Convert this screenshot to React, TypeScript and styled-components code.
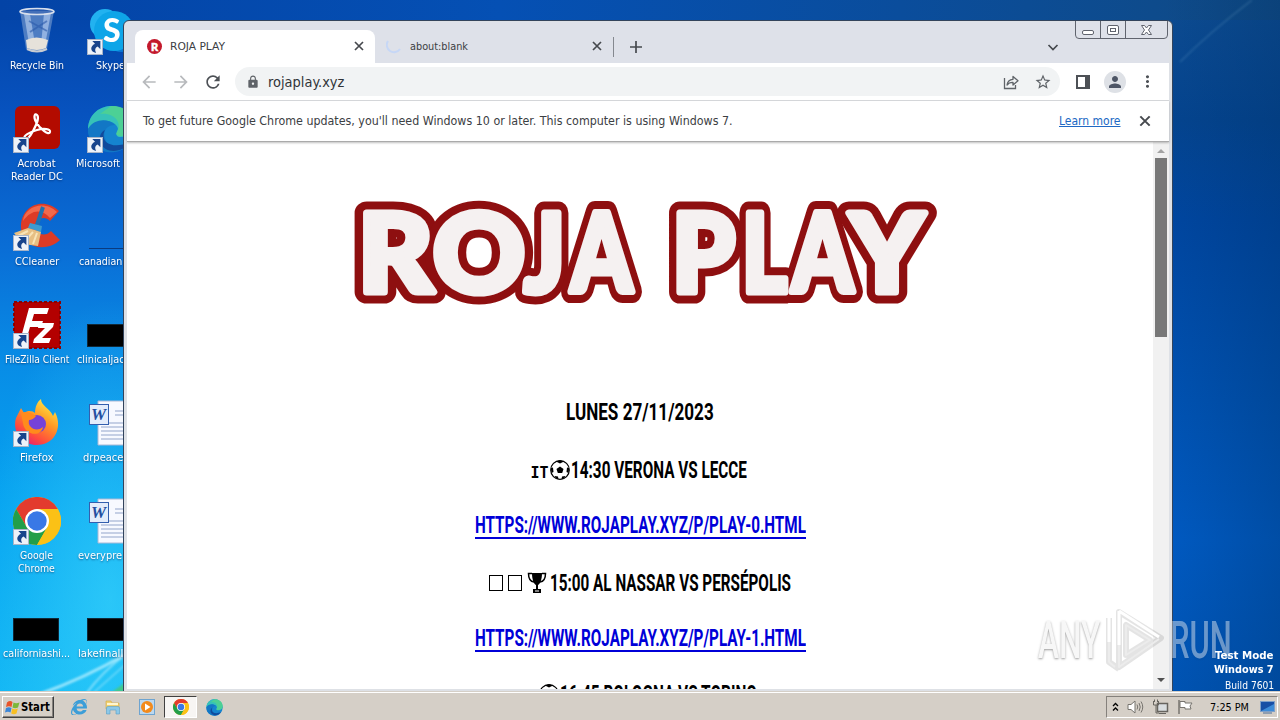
import { useLayoutEffect, useRef, useState, type ReactNode } from 'react';
import { createGlobalStyle, styled } from 'styled-components';
import {
  MdArrowBack,
  MdArrowForward,
  MdLock,
  MdMoreVert,
  MdPerson,
  MdRefresh,
  MdStarBorder,
} from 'react-icons/md';
import { FaInternetExplorer } from 'react-icons/fa';

const UI_FONT = "'DejaVu Sans Condensed', 'DejaVu Sans', sans-serif";

// Squeezes or stretches one line of text to a fixed width
function Fit({ width, children }: { width: number; children: ReactNode }) {
  const ref = useRef<HTMLSpanElement>(null);
  const [scale, setScale] = useState(1);

  useLayoutEffect(() => {
    if (ref.current) setScale(width / ref.current.offsetWidth);
  }, [width]);

  return (
    <Styled.Fit $width={width}>
      <span ref={ref} style={{ transform: `scaleX(${scale})` }}>
        {children}
      </span>
    </Styled.Fit>
  );
}

// Small stroked glyphs of the browser's chrome, on a 12px grid
function Glyph({ d, size = 12 }: { d: string; size?: number }) {
  return (
    <svg width={size} height={size} viewBox="0 0 12 12" fill="none" stroke="#46494e" strokeWidth="1.7">
      <path d={d} />
    </svg>
  );
}

const CROSS = 'M2 2 L10 10 M10 2 L2 10';
const PLUS = 'M6 0 V12 M0 6 H12';
const CHEVRON = 'M1.5 4 L6 8.5 L10.5 4';

function RecycleBin() {
  return (
    <svg width="48" height="48" viewBox="0 0 48 48">
      <path d="M7 4 L13 42 Q24 47 34 42 L41 4Z" fill="#8aa9d6" fillOpacity=".55" />
      <path d="M11 7 L16 37 L22 37 L17 7Z" fill="#e4efff" fillOpacity=".45" />
      <path d="M31 6 L38 6 L32 38 L28 38Z" fill="#d4e5ff" fillOpacity=".5" />
      <path d="M16 14 L34 24 M34 14 L17 25" stroke="#2c5bab" strokeWidth="2" opacity=".6" />
      <path d="M13 33 Q23 28 35 33 L33 41 Q24 45 14 41Z" fill="#e6e2da" />
      <path d="M14 42 Q24 47 34 42" fill="none" stroke="#c8ccd2" strokeWidth="2" />
      <ellipse cx="24" cy="4.5" rx="17" ry="3" fill="#3e67b2" fillOpacity=".6" stroke="#d7dfec" strokeWidth="1.6" />
    </svg>
  );
}

function Skype() {
  return (
    <svg width="48" height="48" viewBox="0 0 48 48">
      <circle cx="18" cy="17" r="15" fill="#22b2f0" />
      <circle cx="34" cy="31" r="14" fill="#0a78d4" />
      <circle cx="27" cy="24" r="20" fill="#0ea5e8" />
      <text x="16" y="35" fontSize="32" fontWeight="900" fontFamily="Lato" fill="#fff">S</text>
    </svg>
  );
}

function Acrobat() {
  return (
    <svg width="48" height="48" viewBox="0 0 48 48">
      <rect x="2" y="1" width="45" height="43" rx="6" fill="#b30b00" />
      <path
        d="M12 34 C9 31 17 27 24 25 C31 23 38 24 37 27 C36 31 27 24 23 17 C20 11 22 8 24 10 C26 12 24 19 20 26 C17 32 13 36 12 34Z"
        fill="none"
        stroke="#fff"
        strokeWidth="2.2"
      />
    </svg>
  );
}

function Edge({ size = 48 }: { size?: number }) {
  return (
    <svg width={size} height={size} viewBox="0 0 48 48">
      <circle cx="24" cy="24" r="23" fill="#1584cf" />
      <path d="M1 24 C2 -6 45 -6 47 20 C47 29 42 32 34 32 C28 32 29 28 31 24 C30 15 10 11 1 24Z" fill="#36c2b8" />
      <path d="M24 1 C39 0 48 11 47 22 C46 31 31 33 29 29 C37 18 27 7 13 9Z" fill="#54d48a" fillOpacity=".75" />
      <path d="M1 24 C7 13 22 13 28 20 C19 20 16 27 18 33 C20 42 31 46 40 41 C29 53 1 48 1 24Z" fill="#1277c5" />
      <path d="M18 25 C12 37 25 45 43 37 C36 48 19 49 14 39 C11 32 14 27 18 25Z" fill="#114a9c" />
    </svg>
  );
}

function CCleaner() {
  return (
    <svg width="48" height="48" viewBox="0 0 48 48">
      <path d="M46 8 C30 -7 7 3 8 25 C9 45 33 50 47 37 L38 28 C33 34 23 32 22 24 C22 15 32 12 37 18Z" fill="#dc3b26" />
      <path d="M44 9 C31 -4 11 4 10 18 C18 7 28 5 37 15Z" fill="#f2694b" />
      <path d="M30 4 L24 22" stroke="#1f72b0" strokeWidth="4" />
      <path d="M17 20 L29 23 L28 29 L15 25Z" fill="#3d9bd0" />
      <path d="M15 25 L28 29 L25 43 L10 41 L1 30Z" fill="#e7bf83" />
      <path d="M15 28 L5 33 M20 29 L11 39 M24 30 L20 41" stroke="#f9e4b7" strokeWidth="2" />
    </svg>
  );
}

function FileZilla() {
  return (
    <svg width="48" height="48" viewBox="0 0 48 48">
      <rect x="1" y="1" width="46" height="46" fill="#b30000" stroke="#8b0000" strokeWidth="2" strokeDasharray="3 2" />
      <path d="M16 7 H36 L34 13 H21 L19 20 H30 L28 26 H17 L13 40 H7Z" fill="#fff" />
      <path d="M26 22 H41 L40 26 L29 37 H38 L36 42 H20 L21 38 L32 27 H25Z" fill="#fff" />
    </svg>
  );
}

function Firefox() {
  return (
    <svg width="48" height="48" viewBox="0 0 48 48">
      <defs>
        <linearGradient id="fox" x1=".8" y1="0" x2=".2" y2="1">
          <stop offset="0" stopColor="#fff04a" />
          <stop offset=".4" stopColor="#ff9a24" />
          <stop offset=".75" stopColor="#ff4b3e" />
          <stop offset="1" stopColor="#e3177e" />
        </linearGradient>
      </defs>
      <path
        d="M28 0 C28 7 37 9 40 17 L42 13 C50 28 42 46 24 46 C8 46 -1 32 3 19 L8 9 L11 14 C15 11 20 12 22 14 C22 8 24 3 28 0Z"
        fill="url(#fox)"
      />
      <circle cx="24" cy="25" r="9" fill="#7542d8" />
      <path d="M8 14 Q15 11 23 17 Q20 21 16 21 C14 28 23 34 30 28 C28 39 11 36 10 24Z" fill="#ff8b1c" />
    </svg>
  );
}

function Chrome({ size = 48 }: { size?: number }) {
  return (
    <svg width={size} height={size} viewBox="0 0 48 48">
      <circle cx="24" cy="24" r="24" fill="#fbc116" />
      <path d="M3.2 12 A24 24 0 0 1 44.8 12 L24 12 L13.6 30Z" fill="#e33b2e" />
      <path d="M3.2 12 A24 24 0 0 0 24 48 L34.4 30 L13.6 30Z" fill="#229e49" />
      <path d="M24 12 H44.8 A24 24 0 0 1 24 48 L34.4 30Z" fill="#fbc116" />
      <circle cx="24" cy="24" r="12" fill="#fff" />
      <circle cx="24" cy="24" r="9.7" fill="#3978e6" />
    </svg>
  );
}

function WordDoc() {
  return (
    <svg width="48" height="48" viewBox="0 0 48 48">
      <path d="M11 2 H46 V46 H11Z" fill="#f7f9ff" stroke="#a9b8d6" />
      <path d="M28 12 H42 M28 16 H42 M14 24 H42 M14 28 H42 M14 32 H42 M14 36 H42 M14 40 H42" stroke="#93a5cb" />
      <rect x="2.5" y="5.5" width="19" height="20" fill="#e3ecfb" stroke="#345fae" />
      <text x="4" y="21" fontSize="17" fontStyle="italic" fontWeight="700" fontFamily="Liberation Serif" fill="#234fa0">W</text>
    </svg>
  );
}

function ShortcutArrow() {
  return (
    <Styled.Shortcut>
      <svg width="14" height="14" viewBox="0 0 13 13">
        <path d="M4 1 H11.5 V8.5 L9 6 C6.5 7 6 9 7.5 12 C2 11 1.5 6 6.5 3.5Z" fill="#17448c" />
      </svg>
    </Styled.Shortcut>
  );
}

type DesktopItem = {
  icon: ReactNode;
  labels: [string, number][];
  shortcut?: boolean;
  left?: number;
};

// Column by column, top to bottom
const ITEMS: DesktopItem[] = [
  { icon: <RecycleBin />, labels: [['Recycle Bin', 54]] },
  { icon: <Acrobat />, labels: [['Acrobat', 38], ['Reader DC', 52]], shortcut: true },
  { icon: <CCleaner />, labels: [['CCleaner', 44]], shortcut: true },
  { icon: <FileZilla />, labels: [['FileZilla Client', 64]], shortcut: true },
  { icon: <Firefox />, labels: [['Firefox', 34]], shortcut: true },
  { icon: <Chrome />, labels: [['Google', 33], ['Chrome', 37]], shortcut: true },
  { icon: null, labels: [['californiashi...', 67]] },
  { icon: <Skype />, labels: [['Skype', 29]], shortcut: true, left: 23 },
  { icon: <Edge />, labels: [['Microsoft', 44]], shortcut: true, left: 3 },
  { icon: undefined, labels: [['canadian', 43]], left: 6 },
  { icon: null, labels: [['clinicaljack', 53]], left: 4 },
  { icon: <WordDoc />, labels: [['drpeace', 40]], left: 10 },
  { icon: <WordDoc />, labels: [['everypre', 44]], left: 5 },
  { icon: null, labels: [['lakefinalls', 50]], left: 5 },
];

function Desktop() {
  return (
    <Styled.Desktop>
      {ITEMS.map(function (item) {
        return (
          <Styled.Item key={item.labels[0][0]}>
            <Styled.ItemIcon>
              {item.icon}
              {item.icon === null && <Styled.Thumb />}
              {item.icon === undefined && <Styled.ThinThumb />}
              {item.shortcut && <ShortcutArrow />}
            </Styled.ItemIcon>
            <Styled.ItemLabel $left={item.left}>
              {item.labels.map(function ([text, width]) {
                return (
                  <Fit key={text} width={width}>
                    {text}
                  </Fit>
                );
              })}
            </Styled.ItemLabel>
          </Styled.Item>
        );
      })}
    </Styled.Desktop>
  );
}

function Wallpaper() {
  return (
    <Styled.Wallpaper>
      <svg width="1280" height="720">
        <defs>
          <filter id="soft">
            <feGaussianBlur stdDeviation="1" />
          </filter>
        </defs>
        <g filter="url(#soft)" fill="none" stroke="#bff2ff">
          <path d="M40 694 Q85 678 126 654" strokeWidth="3" opacity=".75" />
          <path d="M86 694 Q102 672 126 654" strokeWidth="2" opacity=".6" />
          <path d="M92 694 L126 664" strokeWidth="1.5" opacity=".5" />
          <path d="M112 692 L126 682 V692Z" fill="#43c98a" stroke="none" />
          <path d="M1180 62 Q1210 32 1252 0" strokeWidth="2" opacity=".12" />
        </g>
      </svg>
    </Styled.Wallpaper>
  );
}

function TabBar() {
  return (
    <Styled.TabBar>
      <Styled.Tab $active>
        <Styled.Favicon>
          <span>R</span>
        </Styled.Favicon>
        <Fit width={55}>ROJA PLAY</Fit>
        <Glyph d={CROSS} />
      </Styled.Tab>
      <Styled.Tab>
        <svg width="16" height="16" viewBox="0 0 16 16">
          <path d="M2 3 A7 7 0 1 0 14 11" fill="none" stroke="#c6d7f6" strokeWidth="2" />
        </svg>
        <Fit width={58}>about:blank</Fit>
        <Glyph d={CROSS} />
      </Styled.Tab>
      <Styled.TabDivider />
      <Glyph d={PLUS} />
      <Styled.TabSearch>
        <Glyph d={CHEVRON} />
      </Styled.TabSearch>
      <Styled.Controls>
        <svg width="93" height="18" viewBox="0 0 93 18" fill="none" stroke="#60646e">
          <path d="M.5 0 V14 Q.5 17.5 4 17.5 H89 Q92.5 17.5 92.5 14 V0 M25.5 0 V17 M50.5 0 V17" />
          <rect x="7.5" y="9.5" width="11" height="4" rx="1.5" fill="#fff" />
          <rect x="32.5" y="4.5" width="11" height="9" rx="1.5" fill="#fff" />
          <rect x="35.5" y="7.5" width="5" height="3" />
          <path
            d="M66.5 4.5 H69.5 L71.5 7 L73.5 4.5 H76.5 L73.5 9 L76.5 13.5 H73.5 L71.5 11 L69.5 13.5 H66.5 L69.5 9Z"
            fill="#fff"
          />
        </svg>
      </Styled.Controls>
    </Styled.TabBar>
  );
}

function Toolbar() {
  return (
    <Styled.Toolbar>
      <Styled.NavIcon $dim>
        <MdArrowBack size={20} />
      </Styled.NavIcon>
      <Styled.NavIcon $dim>
        <MdArrowForward size={20} />
      </Styled.NavIcon>
      <Styled.NavIcon>
        <MdRefresh size={20} />
      </Styled.NavIcon>
      <Styled.Omnibox>
        <MdLock size={14} />
        <Fit width={76}>rojaplay.xyz</Fit>
        <Styled.OmniActions>
          <svg width="16" height="16" viewBox="0 0 16 16" fill="none" stroke="#5f6368" strokeWidth="1.3">
            <path d="M1.5 4 V14.5 H12.5 V11" />
            <path d="M4 11 C4.5 7 7 5.5 10 5.3 V2.5 L15 6.8 L10 11 V8.3 C7 8.2 5.3 9.2 4 11Z" strokeLinejoin="round" />
          </svg>
          <MdStarBorder size={18} />
        </Styled.OmniActions>
      </Styled.Omnibox>
      <Styled.NavIcon>
        <svg width="14" height="14" viewBox="0 0 14 14">
          <path d="M0 0 H14 V14 H0Z M2 2 V12 H9 V2Z" fill="#4d5156" fillRule="evenodd" />
        </svg>
      </Styled.NavIcon>
      <Styled.Avatar>
        <MdPerson size={18} />
      </Styled.Avatar>
      <Styled.NavIcon>
        <MdMoreVert size={19} />
      </Styled.NavIcon>
    </Styled.Toolbar>
  );
}

// letter, left edge, drawn width
const LOGO: [string, number, number][] = [
  ['R', 358, 75],
  ['O', 433, 92],
  ['J', 524, 41],
  ['A', 571, 61],
  ['P', 672, 63],
  ['L', 742, 45],
  ['A', 792, 61],
  ['Y', 850, 74],
];

function Logo() {
  return (
    <svg width="600" height="112" viewBox="345 198 600 112" strokeLinejoin="round">
      <defs>
        <g id="wordmark" fontFamily="Lato" fontWeight="900" fontSize="109">
          {LOGO.map(function ([letter, x, width]) {
            return (
              <text key={x} x={x} y="292" textLength={width} lengthAdjust="spacingAndGlyphs">
                {letter}
              </text>
            );
          })}
        </g>
      </defs>
      <use href="#wordmark" fill="#8e0f10" stroke="#8e0f10" strokeWidth="23" />
      <use href="#wordmark" fill="#f5f1f1" stroke="#f5f1f1" strokeWidth="7" />
    </svg>
  );
}

function Football() {
  return (
    <svg width="22" height="22" viewBox="0 0 22 22">
      <circle cx="11" cy="11" r="9.3" fill="#fff" stroke="#000" strokeWidth="1.2" />
      <path d="M11 7.5 L14.5 10 L13.2 14 H8.8 L7.5 10Z" />
      <path d="M7 2.5 L11 4.5 L15 2.5 L12 1.5 H10Z M1.8 9 L4 8.5 L4.5 13 L2.5 14Z M20.2 9 L18 8.5 L17.5 13 L19.5 14Z M5.5 17 L9 17.5 L9.5 20.5 L7 19.5Z M16.5 17 L13 17.5 L12.5 20.5 L15 19.5Z" />
    </svg>
  );
}

function Trophy() {
  return (
    <svg width="20" height="22" viewBox="0 0 20 22">
      <path d="M5 1 H15 C15 8 13 12 11 13 V17 H14 V21 H6 V17 H9 V13 C7 12 5 8 5 1Z" />
      <path d="M5 1.5 H1.5 C1.5 7 3 9.5 7 10 M15 1.5 H18.5 C18.5 7 17 9.5 13 10" fill="none" stroke="#000" strokeWidth="1.5" />
      <path d="M8 19 H12" stroke="#fff" />
    </svg>
  );
}

function Page() {
  return (
    <Styled.Page>
      <Styled.Content>
        <Logo />
        <Styled.Listing>
          <Styled.Line $height={58}>
            <Fit width={148}>LUNES 27/11/2023</Fit>
          </Styled.Line>
          <Styled.Line $height={58}>
            <Styled.Country>
              <Fit width={18}>IT</Fit>
            </Styled.Country>
            <Football />
            <Fit width={176}>14:30 VERONA VS LECCE</Fit>
            <Styled.Gap />
          </Styled.Line>
          <Styled.Line $height={55}>
            <Styled.Link>
              <Fit width={331}>HTTPS://WWW.ROJAPLAY.XYZ/P/PLAY-0.HTML</Fit>
            </Styled.Link>
          </Styled.Line>
          <Styled.Line $height={57}>
            <Styled.Missing />
            <Styled.Missing />
            <Trophy />
            <Styled.Gap />
            <Fit width={241}>15:00 AL NASSAR VS PERSÉPOLIS</Fit>
          </Styled.Line>
          <Styled.Line $height={57}>
            <Styled.Link>
              <Fit width={331}>HTTPS://WWW.ROJAPLAY.XYZ/P/PLAY-1.HTML</Fit>
            </Styled.Link>
          </Styled.Line>
          <Styled.Line $height={52}>
            <Styled.Country>
              <Fit width={17}>IT</Fit>
            </Styled.Country>
            <Football />
            <Fit width={197}>16:45 BOLOGNA VS TORINO</Fit>
            <Styled.Gap />
          </Styled.Line>
        </Styled.Listing>
      </Styled.Content>
      <Styled.Scrollbar>
        <Styled.ScrollArrow $color="#a3a3a3" $up />
        <Styled.ScrollThumb />
        <Styled.ScrollArrow $color="#505050" />
      </Styled.Scrollbar>
    </Styled.Page>
  );
}

function Taskbar() {
  return (
    <Styled.Taskbar>
      <Styled.Start>
        <svg width="15" height="15" viewBox="0 0 15 15">
          <path d="M2 2.5 Q5 0 7.5 2 L6.5 7 Q4 5.5 1 7Z" fill="#e8542a" />
          <path d="M8.5 2.5 Q11 4 14.5 2.5 L13 7.5 Q10 9 7.5 7.5Z" fill="#7cb83a" />
          <path d="M1 8 Q4 6.5 6.5 8 L5.5 12.5 Q3 11 0 12.5Z" fill="#3a86d8" />
          <path d="M7.2 8.5 Q10 10 12.8 8.5 L11.5 13.5 Q9 15 6.2 13.5Z" fill="#f8bf23" />
        </svg>
        <Fit width={29}>Start</Fit>
      </Styled.Start>
      <Styled.Launcher>
        <FaInternetExplorer size={16} color="#3c9ed8" />
      </Styled.Launcher>
      <Styled.Launcher>
        <svg width="16" height="16" viewBox="0 0 16 16">
          <path d="M1 2 H6 L7 4 H14 V10 H1Z" fill="#f1d173" stroke="#d2a93d" strokeWidth=".6" />
          <path d="M2 4 H13 V6 H2Z" fill="#fff6cf" />
          <path d="M1.5 15 V9 Q1.5 7.5 3 7.5 H13 Q14.5 7.5 14.5 9 V15 H11 V11 H5 V15Z" fill="#8cc8e8" stroke="#57a0c8" strokeWidth=".6" />
        </svg>
      </Styled.Launcher>
      <Styled.Launcher>
        <svg width="16" height="16" viewBox="0 0 16 16">
          <rect x=".5" y=".5" width="15" height="15" fill="#bcd8ef" stroke="#6ea4d0" />
          <circle cx="8" cy="8" r="6" fill="#f28a1c" />
          <path d="M6 4.5 L11.5 8 L6 11.5Z" fill="#fff" />
        </svg>
      </Styled.Launcher>
      <Styled.Launcher $pressed>
        <Chrome size={16} />
      </Styled.Launcher>
      <Styled.Launcher>
        <Edge size={17} />
      </Styled.Launcher>
      <Styled.Tray>
        <svg width="7" height="10" viewBox="0 0 7 10" fill="none" stroke="#000" strokeWidth="1.3">
          <path d="M1 4 L3.5 1.5 L6 4 M1 8.5 L3.5 6 L6 8.5" />
        </svg>
        <svg width="17" height="16" viewBox="0 0 17 16" fill="none" stroke="#77746f">
          <path d="M1 5.5 H4 L8 2 V14 L4 10.5 H1Z" fill="#fff" />
          <path d="M10 5.5 Q11.5 8 10 10.5 M12 4 Q14.5 8 12 12 M14 2.5 Q17.5 8 14 13.5" />
        </svg>
        <svg width="17" height="16" viewBox="0 0 17 16" fill="none" stroke="#67645f">
          <rect x="5.5" y="4.5" width="10" height="8" fill="#d9dde0" strokeWidth="1.5" />
          <path d="M7 14.5 H14 M1.5 2 V6 H6.5 V2 M2.5 .5 V3 M5.5 .5 V3 M4 6 V14 H7" />
        </svg>
        <svg width="17" height="16" viewBox="0 0 17 16" fill="none" stroke="#77746f">
          <path d="M2 1 V15" strokeWidth="1.5" />
          <path d="M3 2.5 H8 V4 H15 L13 7 L14 10 H8 V8.5 H3Z" fill="#fff" />
        </svg>
        <Styled.Clock>
          <Fit width={39}>7:25 PM</Fit>
        </Styled.Clock>
        <svg width="15" height="13" viewBox="0 0 15 13">
          <rect x=".5" y=".5" width="14" height="10" fill="#174fa5" stroke="#7e9fc8" />
          <path d="M1 10 L14 3 V10Z" fill="#3d8cd8" />
          <path d="M3 12 H12" stroke="#496c98" />
        </svg>
      </Styled.Tray>
    </Styled.Taskbar>
  );
}

function Watermark() {
  return (
    <Styled.Watermark>
      <Styled.MarkWord>
        <Fit width={62}>ANY</Fit>
      </Styled.MarkWord>
      <svg width="60" height="68" viewBox="0 0 60 68" fill="none" strokeLinejoin="round">
        <g stroke="#777" strokeWidth="6" opacity=".2">
          <path d="M14 5 L56 31 L14 60Z M4 11 V55 L14 62 M21 18 V48 L45 33Z" />
        </g>
        <path d="M14 4 V38 M14 4 L54 30 M4 9 V35" stroke="#fff" strokeWidth="3" />
        <path d="M54 32 L14 60 V38 M21 18 V48 L45 33Z M4 35 V55 L10 60" stroke="#ececec" strokeWidth="2" />
      </svg>
      <Styled.MarkWord $faint>
        <Fit width={62}>RUN</Fit>
      </Styled.MarkWord>
    </Styled.Watermark>
  );
}

function App() {
  return (
    <Styled.Screen>
      <GlobalStyle />
      <Wallpaper />
      <Desktop />
      <Styled.Window>
        <TabBar />
        <Toolbar />
        <Styled.Infobar>
          <Fit width={590}>
            To get future Google Chrome updates, you&apos;ll need Windows 10 or
            later. This computer is using Windows 7.
          </Fit>
          <Styled.LearnMore>
            <Fit width={62}>Learn more</Fit>
          </Styled.LearnMore>
          <Glyph d={CROSS} size={14} />
        </Styled.Infobar>
        <Page />
      </Styled.Window>
      <Watermark />
      <Styled.Build>
        <b>
          <Fit width={59}>Test Mode</Fit>
        </b>
        <b>
          <Fit width={60}>Windows 7</Fit>
        </b>
        <Fit width={49}>Build 7601</Fit>
      </Styled.Build>
      <Taskbar />
    </Styled.Screen>
  );
}

export default App;

const GlobalStyle = createGlobalStyle`
  * {
    box-sizing: border-box;
  }

  body {
    margin: 0;
    overflow: hidden;
  }

  svg {
    display: block;
    flex: none;
  }
`;

const Styled = {
  Screen: styled.div`
    position: relative;
    width: 1280px;
    height: 720px;
    overflow: hidden;
    display: flex;
    flex-direction: column;
    justify-content: flex-end;
    font-family: ${UI_FONT};
    font-size: 11px;
  `,
  Fit: styled.span<{ $width: number }>`
    display: flex;
    justify-content: flex-start;
    flex: none;
    width: ${(p) => p.$width}px;
    white-space: nowrap;

    > span {
      flex: none;
      transform-origin: 0 50%;
    }
  `,
  Wallpaper: styled.div`
    position: absolute;
    inset: 0;
    background:
      linear-gradient(90deg, transparent 91%, rgba(0, 48, 100, 0.3) 100%),
      radial-gradient(ellipse 130px 300px at 110px 600px, rgba(72, 224, 255, 0.5), rgba(72, 224, 255, 0)),
      linear-gradient(90deg, #0343a6 0, #0550b4 500px, #0a4d9c 900px, #104a84 1280px) 0 0 / 1280px 20px no-repeat,
      linear-gradient(180deg, #0343a6 0, #0752be 110px, #0a6ed6 250px, #088ce6 360px, #06a3f0 500px, #12b6f4 692px) 0 0 / 400px 720px no-repeat,
      linear-gradient(180deg, #0d4c92 0, #04448f 120px, #0046a0 220px, #0052b2 400px, #005ac2 540px, #0054b4 692px);
  `,
  Desktop: styled.div`
    position: absolute;
    left: 0;
    top: 8px;
    display: grid;
    grid-template-columns: 73px 75px;
    grid-template-rows: repeat(7, 98px);
    grid-auto-flow: column;
    color: #fff;
    line-height: 13px;
  `,
  Item: styled.div`
    min-width: 0;
  `,
  ItemIcon: styled.div`
    position: relative;
    width: 48px;
    height: 48px;
    margin: -1px auto 4px;
    display: flex;
    align-items: center;
  `,
  ItemLabel: styled.div<{ $left?: number }>`
    display: flex;
    flex-direction: column;
    align-items: ${(p) => (p.$left === undefined ? 'center' : 'flex-start')};
    padding-left: ${(p) => p.$left ?? 0}px;
    text-shadow: 0 1px 2px rgba(0, 30, 80, 0.6);
  `,
  Thumb: styled.div`
    flex: none;
    width: 46px;
    height: 23px;
    margin-top: 20px;
    background: #000;
    border: 1px solid #102838;
  `,
  ThinThumb: styled.div`
    width: 46px;
    height: 1px;
    margin: 42px 0 0 2px;
    background: #0a3b80;
  `,
  Shortcut: styled.span`
    position: absolute;
    left: 0;
    bottom: 0;
    width: 16px;
    height: 16px;
    background: #edf2f9;
    border: 1px solid #a8b4c8;
  `,
  Window: styled.div`
    position: absolute;
    left: 123px;
    top: 20px;
    width: 1050px;
    height: 672px;
    padding: 1px 3px 2px;
    display: flex;
    flex-direction: column;
    background: #dee1e6;
    border: 1px solid #33445c;
    border-radius: 6px 6px 0 0;
    overflow: hidden;
    color: #3c4043;
  `,
  TabBar: styled.div`
    position: relative;
    flex: none;
    height: 41px;
    padding: 8px 0 0 8px;
    display: flex;
    align-items: center;
    background: #dee1e9;
  `,
  Tab: styled.div<{ $active?: boolean }>`
    width: ${(p) => (p.$active ? 240 : 238)}px;
    height: 33px;
    padding: 0 10px 1px ${(p) => (p.$active ? 12 : 11)}px;
    display: flex;
    align-items: center;
    gap: 7.5px;
    border-radius: 8px 8px 0 0;
    background: ${(p) => (p.$active ? '#fff' : 'transparent')};

    svg:last-child {
      margin-left: auto;
    }
  `,
  Favicon: styled.span`
    width: 15px;
    height: 15px;
    display: grid;
    place-items: center;
    border-radius: 50%;
    background: #c3192c;
    color: #fff;
    font: 900 11px/15px Lato, sans-serif;
    -webkit-text-stroke: 0.5px #fff;
  `,
  TabDivider: styled.span`
    width: 1px;
    height: 20px;
    margin-right: 16px;
    background: #84888f;
  `,
  TabSearch: styled.span`
    margin: 0 110px 0 auto;
  `,
  Controls: styled.div`
    position: absolute;
    right: 1px;
    top: -1px;
  `,
  Toolbar: styled.div`
    flex: none;
    height: 38px;
    padding: 0 6px;
    display: flex;
    align-items: center;
    background: #fff;
    border-bottom: 1px solid #d8dadd;
  `,
  NavIcon: styled.span<{ $dim?: boolean }>`
    width: 32px;
    display: flex;
    justify-content: center;
    color: ${(p) => (p.$dim ? '#b8babd' : '#4d5156')};
  `,
  Omnibox: styled.div`
    flex: none;
    width: 825px;
    height: 29px;
    margin: 0 7px 0 6px;
    padding: 0 8px 0 11px;
    display: flex;
    align-items: center;
    gap: 8px;
    border-radius: 15px;
    background: #f1f3f4;
    color: #5f6368;
    font-size: 13.5px;

    > span {
      color: #303338;
    }
  `,
  OmniActions: styled.div`
    margin-left: auto;
    display: flex;
    align-items: center;
    gap: 15px;
  `,
  Avatar: styled.span`
    width: 22px;
    height: 22px;
    margin: 0 5px;
    display: grid;
    place-items: center;
    border-radius: 50%;
    background: #dee1e6;
    color: #4d5565;
  `,
  Infobar: styled.div`
    position: relative;
    z-index: 1;
    flex: none;
    height: 41px;
    padding: 0 17px 1px 16px;
    display: flex;
    align-items: center;
    background: #fff;
    border-bottom: 1px solid #aaa;
    box-shadow: 0 1px 2px rgba(0, 0, 0, 0.25);
    font-size: 12px;
  `,
  LearnMore: styled.a`
    margin: 0 17px 0 auto;
    color: #2068c4;
    text-decoration: underline;
  `,
  Page: styled.div`
    flex: 1;
    min-height: 0;
    display: flex;
    background: #fff;
  `,
  Content: styled.div`
    flex: 1;
    min-width: 0;
    padding-top: 56px;
    display: flex;
    flex-direction: column;
    align-items: center;
    overflow: hidden;

    > svg {
      margin-left: 10px;
    }
  `,
  Listing: styled.div`
    margin-top: 73px;
    width: 100%;
    color: #000;
    font-family: Roboto, sans-serif;
    font-size: 24px;
    font-weight: 700;
    line-height: 28px;
  `,
  Line: styled.div<{ $height: number }>`
    height: ${(p) => p.$height}px;
    display: flex;
    align-items: center;
    justify-content: center;
  `,
  Country: styled.span`
    margin: 5px 0 0;
    font: 700 15px 'DejaVu Sans Mono', monospace;
  `,
  Gap: styled.span`
    width: 3px;
  `,
  Missing: styled.span`
    width: 14px;
    height: 16px;
    margin-right: 5px;
    border: 1px solid #000;
  `,
  Link: styled.a`
    color: #0000d8;
    border-bottom: 2px solid #0000d8;
    line-height: 23px;
  `,
  Scrollbar: styled.div`
    width: 16px;
    padding: 0 2px;
    display: flex;
    flex-direction: column;
    align-items: center;
    background: #f1f1f1;
  `,
  ScrollArrow: styled.span<{ $color: string; $up?: boolean }>`
    margin: ${(p) => (p.$up ? '7px 0 5px' : 'auto 0 7px')};
    border: 4px solid transparent;
    border-top: ${(p) => (p.$up ? '0' : `4px solid ${p.$color}`)};
    border-bottom: ${(p) => (p.$up ? `4px solid ${p.$color}` : '0')};
  `,
  ScrollThumb: styled.span`
    width: 12px;
    height: 179px;
    background: #787878;
  `,
  Build: styled.div`
    position: absolute;
    right: 6px;
    bottom: 27px;
    display: flex;
    flex-direction: column;
    align-items: flex-end;
    color: #fff;
    line-height: 14px;

    > span {
      margin-top: 2px;
    }
  `,
  Watermark: styled.div`
    position: absolute;
    left: 1038px;
    top: 607px;
    display: flex;
    align-items: center;
    gap: 5px;
  `,
  MarkWord: styled.span<{ $faint?: boolean }>`
    color: ${(p) => (p.$faint ? 'rgba(255, 255, 255, 0.42)' : '#f7f7f7')};
    font: 500 52px/60px Roboto, sans-serif;
    text-shadow: 0 1px 3px rgba(0, 0, 0, ${(p) => (p.$faint ? 0.08 : 0.4)});
  `,
  Taskbar: styled.div`
    position: relative;
    height: 29px;
    padding: 4px 2px 2px;
    display: flex;
    align-items: center;
    background: #d5cfc7;
    border-top: 1px solid #d5cfc7;
    box-shadow: inset 0 1px #fff;
    color: #000;
  `,
  Start: styled.div`
    width: 52px;
    height: 22px;
    margin-right: 8px;
    padding-left: 2px;
    display: flex;
    align-items: center;
    gap: 1px;
    border: 1px solid;
    border-color: #fff #404040 #404040 #fff;
    box-shadow: inset -1px -1px #86827d;
    font-weight: 700;
    font-size: 12px;
  `,
  Launcher: styled.span<{ $pressed?: boolean }>`
    width: ${(p) => (p.$pressed ? 33 : 34)}px;
    height: 22px;
    display: grid;
    place-items: center;
    border: 1px solid;
    border-color: ${(p) => (p.$pressed ? '#404040 #fff #fff #404040' : 'transparent')};
    background: ${(p) => (p.$pressed ? '#f7f5f3' : 'none')};
  `,
  Tray: styled.div`
    width: 172px;
    height: 22px;
    margin-left: auto;
    padding: 0 2px 0 5px;
    display: flex;
    align-items: center;
    gap: 8px;
    border: 1px solid;
    border-color: #85817c #fff #fff #85817c;
  `,
  Clock: styled.span`
    margin: 0 3px 0 auto;
  `,
};
